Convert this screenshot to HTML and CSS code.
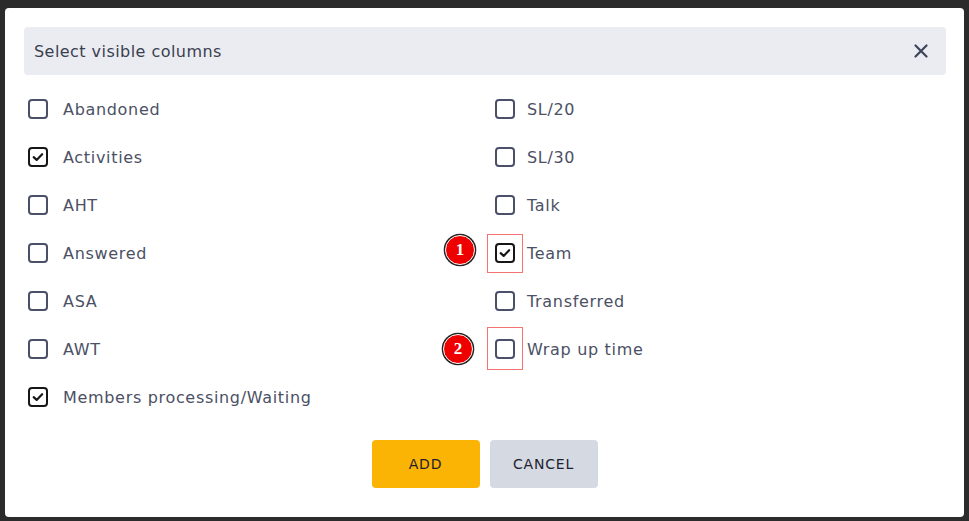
FILE: index.html
```html
<!DOCTYPE html>
<html>
<head>
<meta charset="utf-8">
<link rel="stylesheet" href="styles.css">
</head>
<body>
<div class="modal">
  <div class="header">
    <span class="title">Select visible columns</span>
    <svg class="close" width="14" height="14" viewBox="0 0 14 14"><path d="M1.5 1.5 L12.5 12.5 M12.5 1.5 L1.5 12.5" stroke="#3f4559" stroke-width="2.2" stroke-linecap="round"/></svg>
  </div>
  <div class="grid">
    <div class="col">
      <label class="item"><span class="box"></span><span class="lbl">Abandoned</span></label>
      <label class="item"><span class="box checked"><svg viewBox="0 0 20 20" width="18" height="18"><path d="M4.6 10.2 L8.3 13.6 L15.2 6.5" fill="none" stroke="#161616" stroke-width="2.7" stroke-linecap="round" stroke-linejoin="round"/></svg></span><span class="lbl">Activities</span></label>
      <label class="item"><span class="box"></span><span class="lbl">AHT</span></label>
      <label class="item"><span class="box"></span><span class="lbl">Answered</span></label>
      <label class="item"><span class="box"></span><span class="lbl">ASA</span></label>
      <label class="item"><span class="box"></span><span class="lbl">AWT</span></label>
      <label class="item"><span class="box checked"><svg viewBox="0 0 20 20" width="18" height="18"><path d="M4.6 10.2 L8.3 13.6 L15.2 6.5" fill="none" stroke="#161616" stroke-width="2.7" stroke-linecap="round" stroke-linejoin="round"/></svg></span><span class="lbl">Members processing/Waiting</span></label>
    </div>
    <div class="col right">
      <label class="item"><span class="box"></span><span class="lbl">SL/20</span></label>
      <label class="item"><span class="box"></span><span class="lbl">SL/30</span></label>
      <label class="item"><span class="box"></span><span class="lbl">Talk</span></label>
      <label class="item"><span class="boxwrap"><span class="mark mark1"></span><span class="badge b1">1</span><span class="box checked"><svg viewBox="0 0 20 20" width="18" height="18"><path d="M4.6 10.2 L8.3 13.6 L15.2 6.5" fill="none" stroke="#161616" stroke-width="2.7" stroke-linecap="round" stroke-linejoin="round"/></svg></span></span><span class="lbl">Team</span></label>
      <label class="item"><span class="box"></span><span class="lbl">Transferred</span></label>
      <label class="item"><span class="boxwrap"><span class="mark mark2"></span><span class="badge b2">2</span><span class="box"></span></span><span class="lbl">Wrap up time</span></label>
    </div>
  </div>
  <div class="actions">
    <button class="btn add">ADD</button>
    <button class="btn cancel">CANCEL</button>
  </div>
</div>
</body>
</html>
```
FILE: styles.css
```css
html, body {
  margin: 0;
  padding: 0;
  background: #2b2b2b;
  font-family: "DejaVu Sans", "Noto Sans", sans-serif;
}
.modal {
  margin: 8px 5px 4px 5px;
  width: 959px;
  height: 509px;
  box-sizing: border-box;
  background: #fff;
  border-radius: 4px;
  padding: 19px 18px 29px 19px;
  display: flex;
  flex-direction: column;
}
.header {
  height: 48px;
  background: #ebecf1;
  border-radius: 4px;
  display: flex;
  align-items: center;
  justify-content: space-between;
  padding: 0 18px 0 10px;
}
.title {
  font-size: 16px;
  color: #3a3f50;
  letter-spacing: 0.45px;
}
.close { display: block; }
.grid {
  margin-top: 10px;
  display: grid;
  grid-template-columns: 466px 1fr;
}
.col { display: flex; flex-direction: column; }
.item {
  height: 48px;
  display: flex;
  align-items: center;
  padding-left: 4px;
}
.right .item { padding-left: 5px; }
.box {
  width: 20px;
  height: 20px;
  box-sizing: border-box;
  border: 2px solid #4a5068;
  border-radius: 4px;
  display: flex;
  align-items: center;
  justify-content: center;
  flex: none;
}
.box.checked { border-color: #161616; }
.box svg { display: block; }
.lbl {
  margin-left: 15px;
  font-size: 16px;
  color: #4b5064;
  letter-spacing: 0.68px;
}
.right .lbl { margin-left: 12px; }
.boxwrap { position: relative; display: flex; }
.mark {
  position: absolute;
  left: -8px;
  right: -8px;
  border: 1.5px solid #f47272;
}
.mark1 { top: -9px; bottom: -10px; }
.mark2 { top: -12px; bottom: -11px; }
.badge {
  position: absolute;
  width: 28px;
  height: 28px;
  border-radius: 50%;
  background: #ee0000;
  border: 1.5px solid #fff;
  box-shadow: 0 0 0 1.3px #222;
  color: #fff;
  font-family: "Liberation Serif", "DejaVu Serif", serif;
  font-weight: bold;
  font-size: 17px;
  display: flex;
  align-items: center;
  justify-content: center;
}
.b1 { left: -50px; top: -8px; }
.b2 { left: -52px; top: -5px; }
.actions {
  margin-top: auto;
  display: flex;
  justify-content: center;
  gap: 10px;
  padding-right: 1px;
}
.btn {
  width: 108px;
  height: 48px;
  border: none;
  border-radius: 4px;
  font-family: "DejaVu Sans", "Noto Sans", sans-serif;
  font-size: 14px;
  color: #1e2230;
  letter-spacing: 0.8px;
}
.add { background: #fbb404; }
.cancel { background: #d5d9e1; }
```
